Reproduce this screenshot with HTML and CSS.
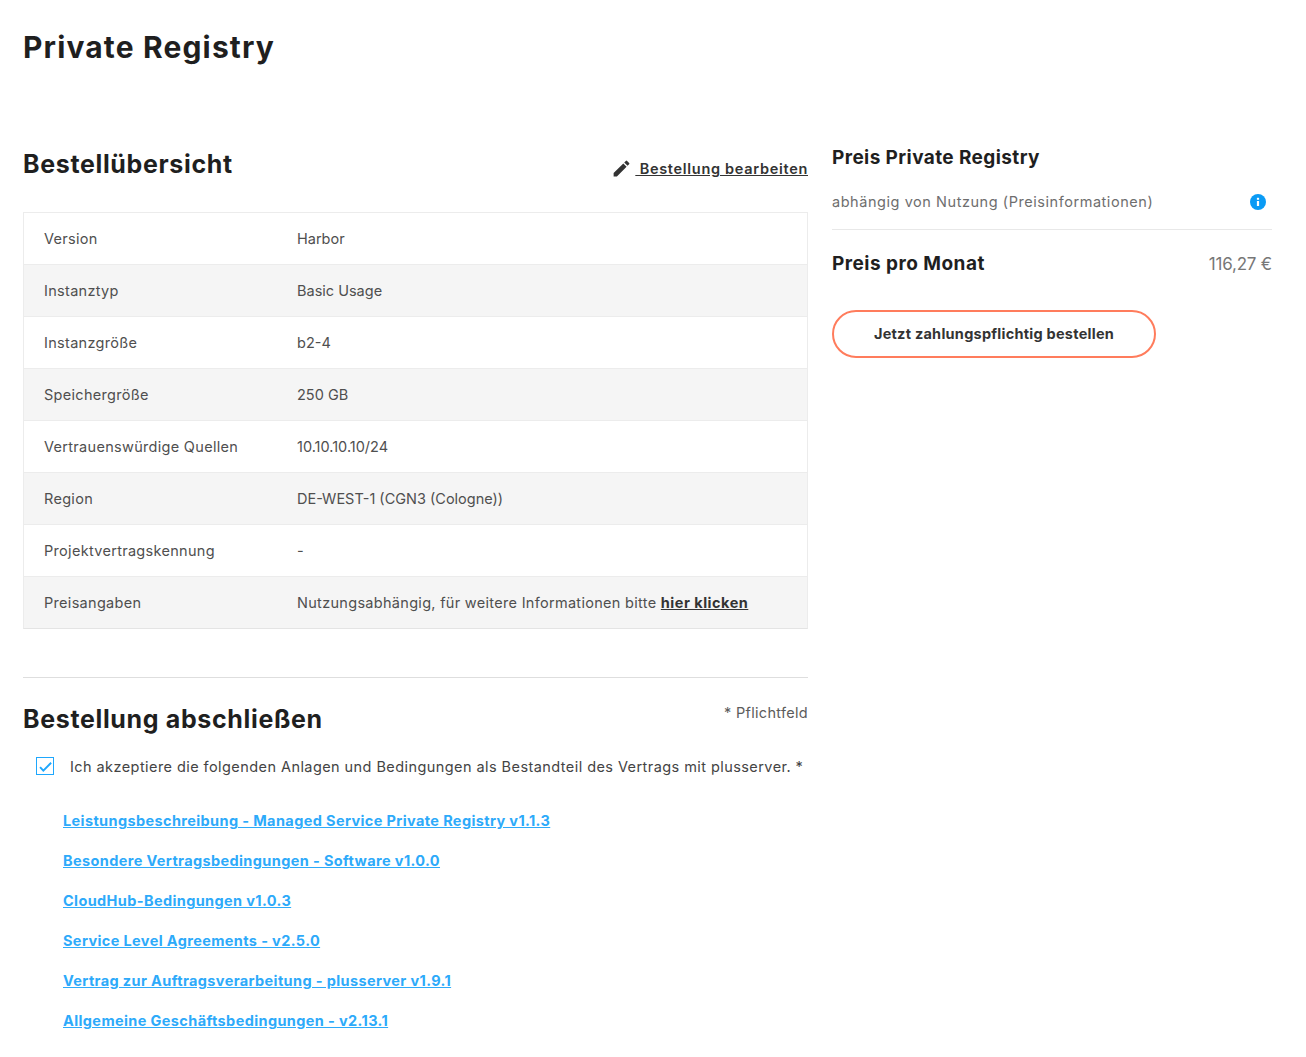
FILE: index.html
```html
<!DOCTYPE html>
<html lang="de">
<head>
<meta charset="utf-8">
<title>Private Registry</title>
<link rel="stylesheet" href="styles.css">
</head>
<body>
<main class="page">
  <h1 class="title">Private Registry</h1>
  <div class="columns">
    <section class="left">
      <div class="head-row">
        <h2 class="h2">Bestellübersicht</h2>
        <a class="edit" href="#"><svg class="pencil" viewBox="0 0 24 24" width="21" height="21"><path fill="#333" d="M3 17.25V21h3.75L17.81 9.94l-3.75-3.75L3 17.25zM20.71 7.04a1 1 0 0 0 0-1.41l-2.34-2.34a1 1 0 0 0-1.41 0l-1.83 1.83 3.75 3.75 1.83-1.83z"/></svg><span class="edit-text">&nbsp;Bestellung bearbeiten</span></a>
      </div>
      <div class="table">
        <div class="row"><div class="key">Version</div><div class="value">Harbor</div></div>
        <div class="row"><div class="key">Instanztyp</div><div class="value">Basic Usage</div></div>
        <div class="row"><div class="key">Instanzgröße</div><div class="value">b2-4</div></div>
        <div class="row"><div class="key">Speichergröße</div><div class="value">250 GB</div></div>
        <div class="row"><div class="key">Vertrauenswürdige Quellen</div><div class="value">10.10.10.10/24</div></div>
        <div class="row"><div class="key">Region</div><div class="value">DE-WEST-1 (CGN3 (Cologne))</div></div>
        <div class="row"><div class="key">Projektvertragskennung</div><div class="value">-</div></div>
        <div class="row"><div class="key">Preisangaben</div><div>Nutzungsabhängig, für weitere Informationen bitte <a class="strong-link" href="#">hier klicken</a></div></div>
      </div>
      <hr class="divider">
      <div class="finish-head">
        <h2 class="h2">Bestellung abschließen</h2>
        <span class="required">* Pflichtfeld</span>
      </div>
      <div class="accept">
        <span class="checkbox"><svg viewBox="0 0 16 16" width="15" height="15"><path d="M2.2 8.6l3.5 3.8L14 4" fill="none" stroke="#1ea7fd" stroke-width="2"/></svg></span>
        <span class="accept-text">Ich akzeptiere die folgenden Anlagen und Bedingungen als Bestandteil des Vertrags mit plusserver. *</span>
      </div>
      <ul class="docs">
        <li><a href="#">Leistungsbeschreibung - Managed Service Private Registry v1.1.3</a></li>
        <li><a href="#">Besondere Vertragsbedingungen - Software v1.0.0</a></li>
        <li><a href="#">CloudHub-Bedingungen v1.0.3</a></li>
        <li><a href="#">Service Level Agreements - v2.5.0</a></li>
        <li><a href="#">Vertrag zur Auftragsverarbeitung - plusserver v1.9.1</a></li>
        <li><a href="#">Allgemeine Geschäftsbedingungen - v2.13.1</a></li>
      </ul>
    </section>
    <aside class="right">
      <h3 class="h3">Preis Private Registry</h3>
      <div class="usage">
        <span>abhängig von Nutzung (Preisinformationen)</span>
        <svg class="info" viewBox="0 0 16 16" width="16" height="16"><circle cx="8" cy="8" r="8" fill="#0a9bf5"/><rect x="6.9" y="7" width="2.2" height="5" fill="#fff"/><rect x="6.9" y="3.8" width="2.2" height="2" fill="#fff"/></svg>
      </div>
      <div class="price-row">
        <span class="price-label">Preis pro Monat</span>
        <span class="price">116,27 €</span>
      </div>
      <button class="order" type="button">Jetzt zahlungspflichtig bestellen</button>
    </aside>
  </div>
</main>
</body>
</html>
```

FILE: styles.css
```css
* { box-sizing: border-box; }
html, body { margin: 0; padding: 0; background: #fff; }
body {
  font-family: "Inter", "Liberation Sans", sans-serif;
  color: #4a4a4a;
  font-size: 14px;
  height: 1057px;
  overflow: hidden;
}
.page { padding: 28px 34px 0 23px; }
.title {
  margin: 0;
  font-size: 30px;
  line-height: 38px;
  font-weight: 700;
  color: #1f1f1f;
  letter-spacing: 1.15px;
}
.columns {
  display: grid;
  grid-template-columns: 785px 440px;
  column-gap: 24px;
  margin-top: 73px;
}
.head-row {
  display: flex;
  justify-content: space-between;
  align-items: flex-start;
  height: 63px;
  padding-top: 9px;
}
.h2 {
  margin: 0;
  font-size: 25px;
  line-height: 32px;
  font-weight: 700;
  color: #1f1f1f;
  letter-spacing: 0.65px;
}
.edit {
  display: flex;
  align-items: center;
  color: #333;
  text-decoration: none;
  font-weight: 600;
  font-size: 14.5px;
  line-height: 20px;
  letter-spacing: 0.7px;
  margin-top: 10px;
}
.pencil { margin-right: 3px; }
.edit-text { text-decoration: underline; }
.table {
  margin-top: 10px;
  border: 1px solid #ececec;
  border-bottom-color: #e4e4e4;
}
.row {
  display: grid;
  grid-template-columns: 253px 1fr;
  height: 52px;
  align-items: center;
  padding-left: 20px;
  border-top: 1px solid #ececec;
  font-size: 14.5px;
  color: #4f4f4f;
  letter-spacing: 0.3px;
}
.row:first-child { border-top: 0; height: 51px; }
.row:nth-child(even) { background: #f5f5f5; }
.value { letter-spacing: 0; }
.strong-link { color: #333; font-weight: 700; letter-spacing: 0.5px; }
.divider {
  border: 0;
  border-top: 1px solid #dedede;
  margin: 48px 0 0;
}
.finish-head {
  display: flex;
  justify-content: space-between;
  padding-top: 25px;
}
.required { font-size: 14.5px; color: #5c5c5c; line-height: 20px; letter-spacing: 0.3px; }
.accept {
  display: flex;
  align-items: flex-start;
  margin-top: 22px;
  padding-left: 13px;
}
.checkbox {
  width: 18px;
  height: 18px;
  border: 1.5px solid #1ea7fd;
  display: flex;
  align-items: center;
  justify-content: center;
  flex: none;
}
.accept-text { margin-left: 16px; font-size: 14.5px; color: #444; line-height: 20px; white-space: nowrap; letter-spacing: 0.43px; }
.docs {
  list-style: none;
  margin: 34px 0 0;
  padding: 0 0 0 40px;
  display: flex;
  flex-direction: column;
  gap: 20px;
}
.docs li { line-height: 20px; }
.docs a { color: #2daafa; font-weight: 700; font-size: 14.5px; letter-spacing: 0.38px; }
.h3 {
  margin: 0;
  font-size: 19px;
  line-height: 24px;
  font-weight: 700;
  color: #1f1f1f;
  letter-spacing: 0.4px;
}
.right { padding-top: 7px; }
.usage {
  display: flex;
  justify-content: space-between;
  align-items: center;
  margin-top: 21px;
  height: 20px;
  padding-right: 6px;
  color: #6e6e6e;
  font-size: 14.5px;
  letter-spacing: 0.55px;
}
.info { margin-top: 2px; }
.price-row {
  display: flex;
  justify-content: space-between;
  align-items: center;
  margin-top: 18px;
  border-top: 1px solid #e8e8e8;
  padding-top: 22px;
}
.price-label { font-size: 19px; line-height: 24px; font-weight: 700; color: #1f1f1f; letter-spacing: 0.47px; }
.price { font-size: 17px; color: #777; line-height: 24px; letter-spacing: -0.2px; }
.order {
  display: block;
  margin-top: 34px;
  padding: 0 0 2px;
  width: 324px;
  height: 48px;
  background: #fff;
  border: 2px solid #ff7c5c;
  border-radius: 24px;
  font-family: inherit;
  font-size: 14.5px;
  font-weight: 700;
  color: #333;
  letter-spacing: 0.25px;
}
```
